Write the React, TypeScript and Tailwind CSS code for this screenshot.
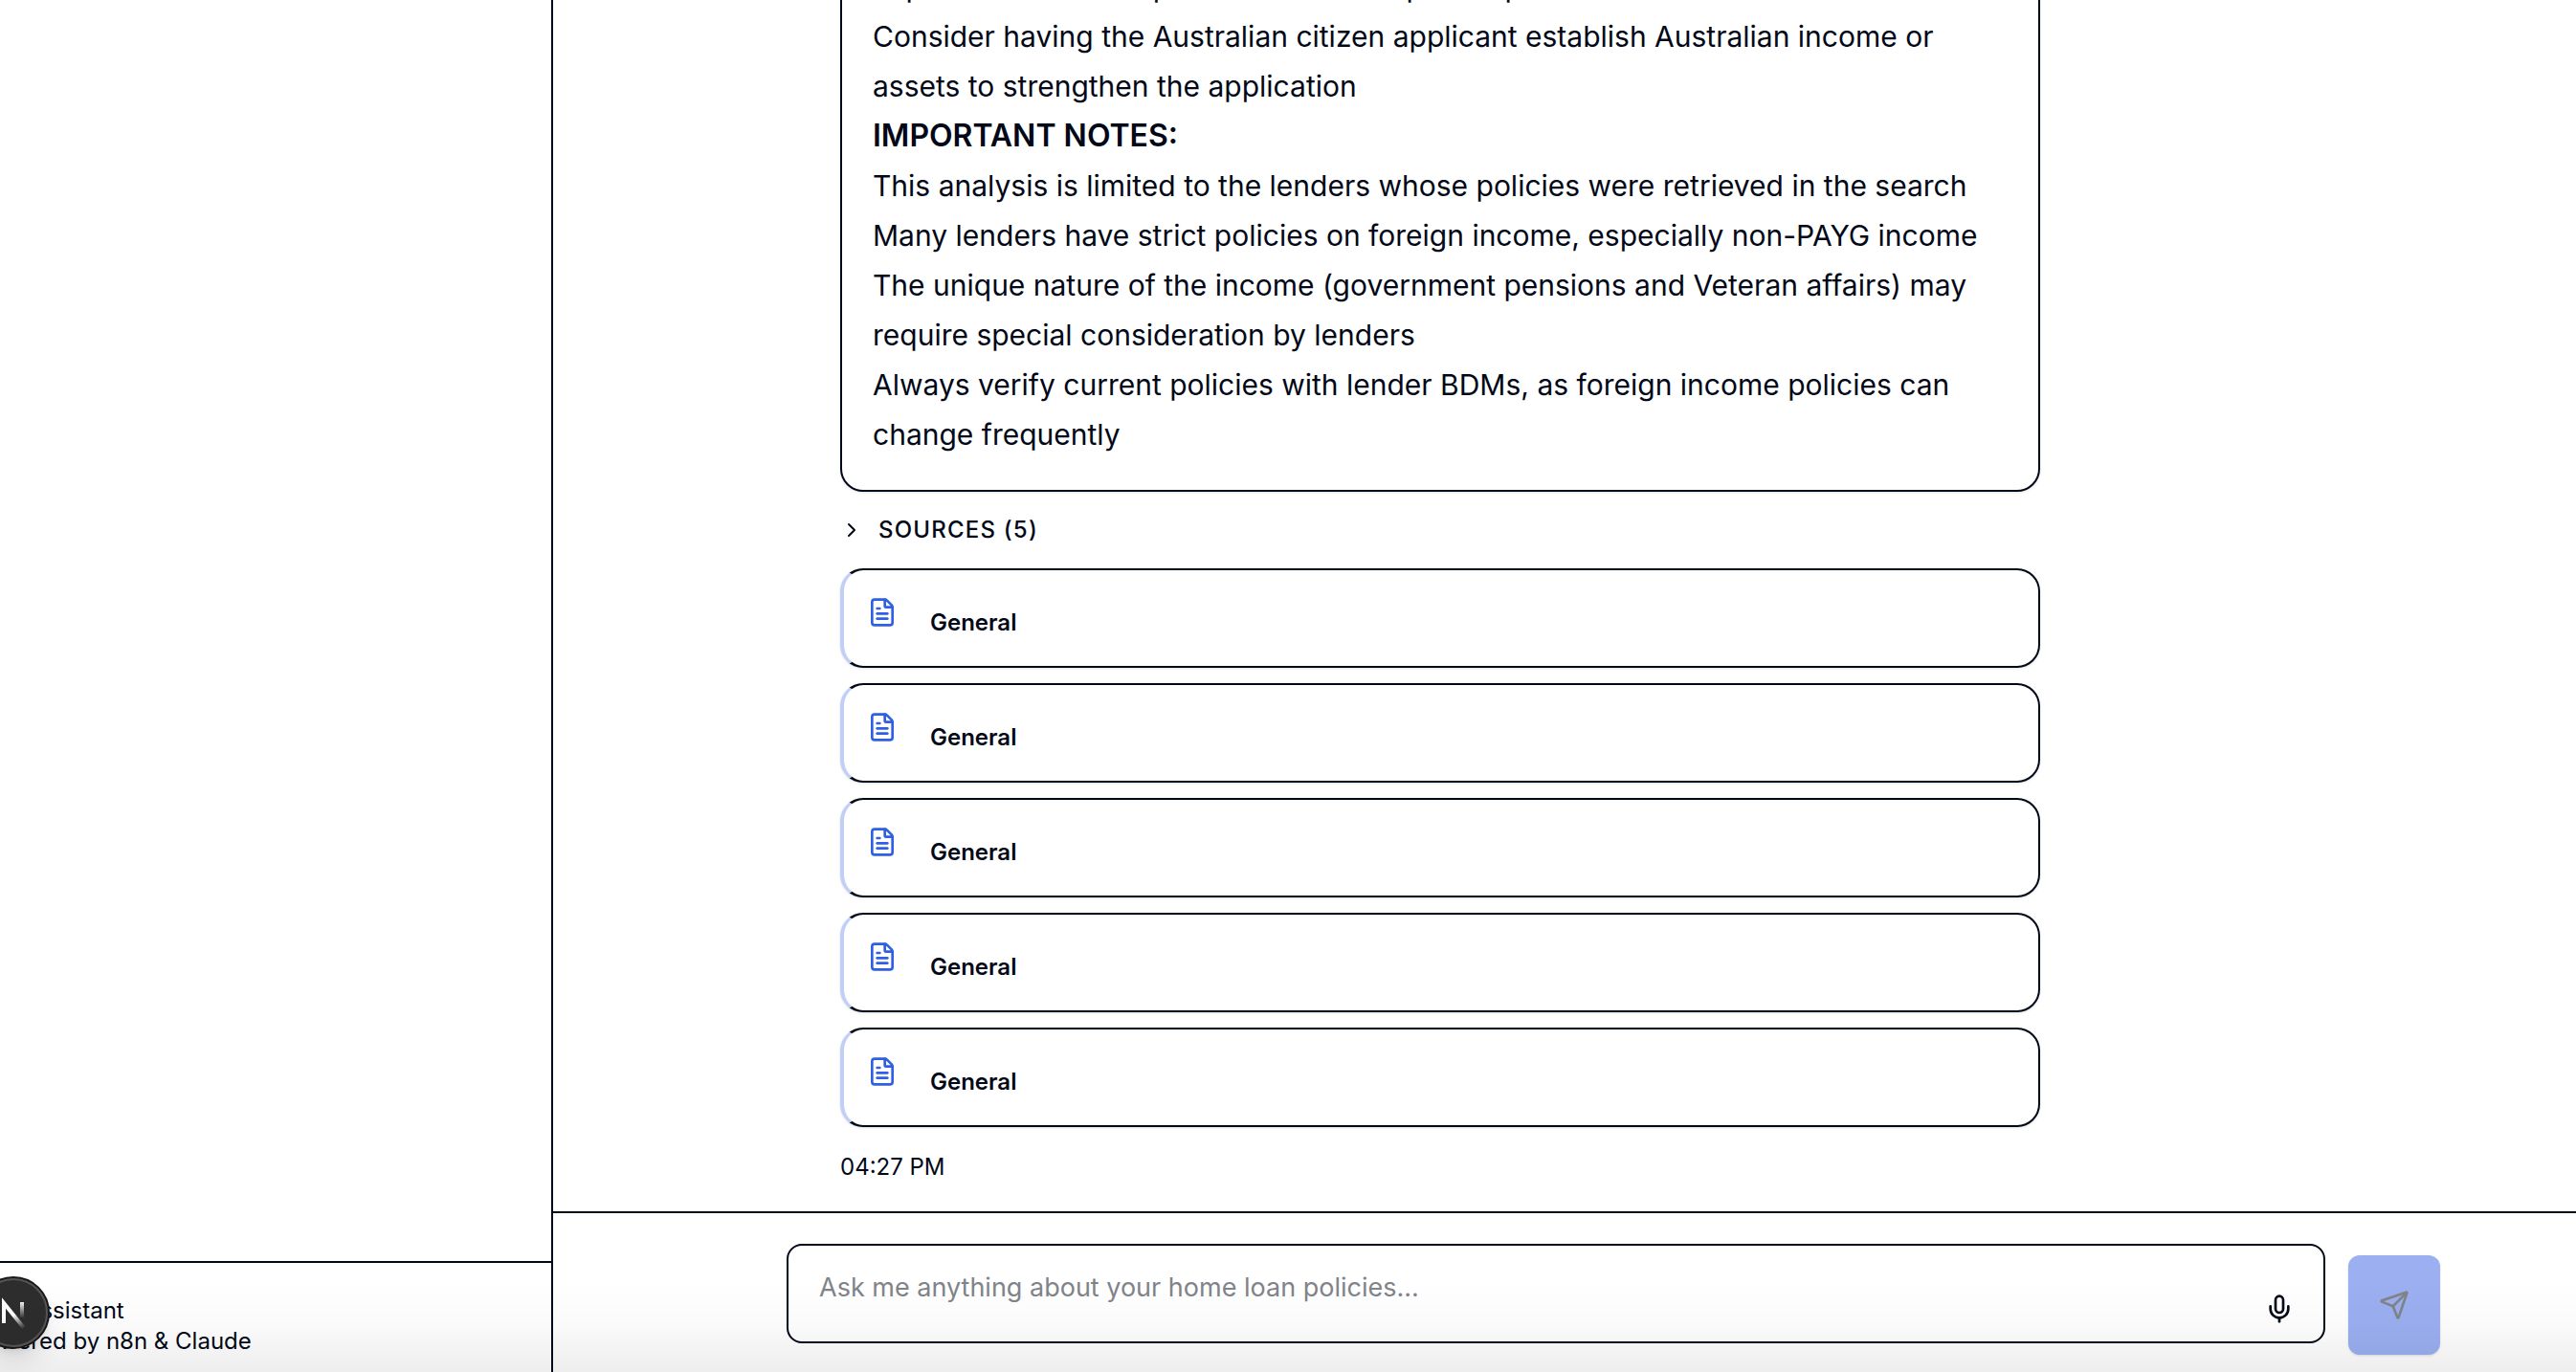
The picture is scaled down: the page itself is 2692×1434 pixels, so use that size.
import { ChevronRight, FileText, Mic, Send } from "lucide-react";

const notes = [
  "Explore whether the pension income is paid in part",
  "Consider having the Australian citizen applicant establish Australian income or assets to strengthen the application",
  "IMPORTANT NOTES:",
  "This analysis is limited to the lenders whose policies were retrieved in the search",
  "Many lenders have strict policies on foreign income, especially non-PAYG income",
  "The unique nature of the income (government pensions and Veteran affairs) may require special consideration by lenders",
  "Always verify current policies with lender BDMs, as foreign income policies can change frequently",
];

const sources = ["General", "General", "General", "General", "General"];

function Sidebar() {
  return (
    <aside className="flex w-[640px] shrink-0 flex-col justify-end border-r-2 border-[#020817]">
      <footer className="border-t-2 border-[#020817] px-8 pt-[34px] pb-4 text-2xl">
        <p>RAG Assistant</p>
        <p>Powered by n8n &amp; Claude</p>
      </footer>
    </aside>
  );
}

function SourceCard({ title }: { title: string }) {
  return (
    <li className="flex h-[104px] items-start gap-[34px] rounded-3xl border-2 border-l-4 border-[#020817] border-l-[#c1cff8] bg-white p-6 shadow-sm">
      <FileText className="mt-1 size-8 shrink-0 text-[#2f5fe3]" />
      <span className="mt-[15px] text-2xl font-semibold">{title}</span>
    </li>
  );
}

function Message() {
  return (
    <article className="mx-14 flex w-[1254px] flex-col">
      <div className="rounded-3xl border-2 border-[#020817] bg-white px-8 pt-6 pb-8 text-[30px] leading-[52px] shadow-sm">
        {notes.map((note) => (
          <p key={note} className={note.endsWith(":") ? "text-[32px] leading-[52px] font-semibold" : undefined}>
            {note}
          </p>
        ))}
      </div>
      <button type="button" className="my-4 flex h-12 items-center gap-4 text-left text-2xl font-medium tracking-wider">
        <ChevronRight className="size-6" />
        SOURCES (5)
      </button>
      <ul className="flex flex-col gap-4">
        {sources.map((title, i) => (
          <SourceCard key={i} title={title} />
        ))}
      </ul>
      <time className="mt-[26px] text-2xl">04:27 PM</time>
    </article>
  );
}

function Composer() {
  return (
    <form className="border-t-2 border-[#020817] pt-8">
      <div className="mx-auto flex w-[1728px] gap-6 pb-[18px]">
        <div className="relative h-[104px] grow">
          <textarea
            aria-label="Message"
            placeholder="Ask me anything about your home loan policies..."
            className="block h-full w-full resize-none rounded-2xl border-2 border-[#020817] bg-white py-6 pr-24 pl-8 text-[27px] leading-10 placeholder:text-[#808489]"
          />
          <button type="button" aria-label="Record voice" className="absolute right-8 bottom-5">
            <Mic className="size-8" />
          </button>
        </div>
        <button
          type="submit"
          aria-label="Send"
          className="mt-3 flex h-[104px] w-24 items-center justify-center rounded-xl bg-[#9baff1] text-[#808489] shadow-sm"
        >
          <Send className="size-8" />
        </button>
      </div>
    </form>
  );
}

function DevBadge() {
  return (
    <button
      type="button"
      aria-label="Open developer tools"
      className="absolute bottom-6 -left-6 size-[76px] rounded-full border-2 border-[#171717] bg-[#2d2d2d] shadow-xl"
    >
      <svg viewBox="0 0 72 72" fill="none" className="size-full">
        <defs>
          <linearGradient id="stem" x1="0" y1="24" x2="0" y2="42" gradientUnits="userSpaceOnUse">
            <stop stopColor="#fff" />
            <stop offset="1" stopColor="#fff" stopOpacity="0" />
          </linearGradient>
          <linearGradient id="diagonal" x1="38" y1="37" x2="48" y2="52" gradientUnits="userSpaceOnUse">
            <stop stopColor="#fff" />
            <stop offset="1" stopColor="#fff" stopOpacity="0" />
          </linearGradient>
        </defs>
        <circle cx="36" cy="36" r="35" stroke="#555" strokeWidth="2" />
        <path d="M26 47V26L47 52" stroke="url(#diagonal)" strokeWidth="4" />
        <path d="M45 25V41" stroke="url(#stem)" strokeWidth="4" />
      </svg>
    </button>
  );
}

export default function App() {
  return (
    <div className="relative h-screen overflow-hidden bg-white font-['Inter',sans-serif] text-[#020817]">
      <div className="-mr-[102px] -ml-[62px] flex h-full">
        <Sidebar />
        <main className="flex min-w-0 grow flex-col">
          <section className="flex min-h-0 grow flex-col justify-end overflow-hidden">
            <div className="mx-auto w-[1728px] pb-[30px]">
              <Message />
            </div>
          </section>
          <Composer />
        </main>
      </div>
      <DevBadge />
      <div className="pointer-events-none absolute inset-x-0 bottom-0 h-24 bg-linear-to-t from-black/7 via-black/2 to-transparent" />
    </div>
  );
}
